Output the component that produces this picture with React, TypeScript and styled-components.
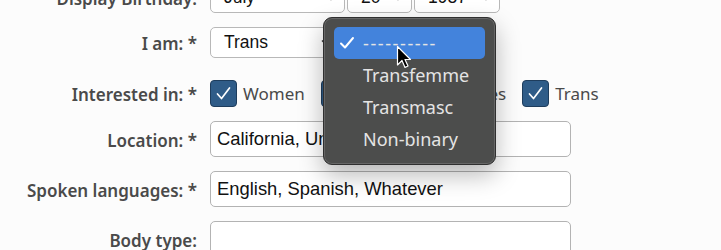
import styled, { createGlobalStyle } from 'styled-components'

const GlobalStyle = createGlobalStyle`
  html, body {
    margin: 0;
    padding: 0;
    background: #fcfcfc;
    overflow: hidden;
  }
`

const labelFont = `'Noto Sans', 'Open Sans', sans-serif`
const fieldFont = `'Liberation Sans', Arial, sans-serif`

/**
 * Page — the form is scrolled, so its first row is cut off at the top
 */
const Page = styled.div`
  position: relative;
  width: 721px;
  height: 250px;
  overflow: hidden;
`

const Form = styled.div`
  display: flex;
  flex-direction: column;
  gap: 14px;
  margin-top: -18px;
`

const Row = styled.div<{ $padTop?: number }>`
  display: grid;
  grid-template-columns: 197px 361px;
  column-gap: 13px;
  align-items: center;
  padding-top: ${({ $padTop }) => $padTop ?? 0}px;
`

const Label = styled.div`
  text-align: right;
  font-family: ${labelFont};
  font-size: 17px;
  font-weight: 600;
  color: #4a4a4a;
  white-space: nowrap;
  padding-top: 2px;
`

const Inline = styled.div`
  display: flex;
  align-items: center;
  gap: 2px;
`

const SelectBox = styled.div<{ $w: number }>`
  box-sizing: border-box;
  width: ${({ $w }) => $w}px;
  height: 31px;
  display: flex;
  align-items: center;
  justify-content: space-between;
  padding: 0 8px 0 13px;
  background: #fff;
  border: 1px solid #b8b8b8;
  border-radius: 5px;
  font-family: ${fieldFont};
  font-size: 17.5px;
  color: #111;
`

const TextInput = styled.div`
  box-sizing: border-box;
  width: 361px;
  height: 36px;
  display: flex;
  align-items: center;
  padding: 0 6px;
  background: #fff;
  border: 1px solid #b3b3b3;
  border-radius: 5px;
  font-family: ${fieldFont};
  font-size: 18.4px;
  color: #111;
  white-space: nowrap;
  overflow: hidden;
`

const Checks = styled.div`
  display: flex;
  align-items: center;
  gap: 16px;
`

const CheckItem = styled.label`
  display: flex;
  align-items: center;
  gap: 6px;
  font-family: ${labelFont};
  font-size: 17px;
  color: #4a4a4a;
`

const CheckBox = styled.span`
  box-sizing: border-box;
  width: 27px;
  height: 27px;
  display: flex;
  align-items: center;
  justify-content: center;
  background: #2f5c88;
  border: 1.5px solid #1e3d5d;
  border-radius: 4px;
`

/**
 * Native-looking popup menu, lying over the form
 */
const Menu = styled.div`
  position: absolute;
  left: 323px;
  top: 17px;
  width: 173px;
  box-sizing: border-box;
  padding: 9px 10px;
  background: #4c4d4c;
  border: 1px solid #2f2f2f;
  border-radius: 9px;
  box-shadow: inset 0 0 0 1px #666, 0 10px 24px rgba(0, 0, 0, 0.28);
`

const MenuItem = styled.div<{ $active?: boolean }>`
  height: 32px;
  display: flex;
  align-items: center;
  padding-left: 29px;
  position: relative;
  border-radius: 5px;
  background: ${({ $active }) => ($active ? '#4383dc' : 'transparent')};
  font-family: ${labelFont};
  font-size: 18px;
  color: #e4e4e4;
  letter-spacing: ${({ $active }) => ($active ? '1.6px' : '0')};
`

const Tick = styled.svg`
  position: absolute;
  left: 5px;
  top: 9px;
`

const Cursor = styled.svg`
  position: absolute;
  left: 396px;
  top: 45px;
`

const Chevron = () => (
  <svg width="10" height="7" viewBox="0 0 10 7">
    <path d="M1 1.5 L5 5.5 L9 1.5" fill="none" stroke="#333" strokeWidth="1.4" />
  </svg>
)

const Check = () => (
  <svg width="17" height="15" viewBox="0 0 17 15">
    <path d="M2.5 8 L6.5 12.5 L14.5 2" fill="none" stroke="#fff" strokeWidth="1.7" strokeLinecap="round" strokeLinejoin="round" />
  </svg>
)

export default function App() {
  return (
    <Page>
      <GlobalStyle />
      <Form>
        <Row>
          <Label>Display Birthday:</Label>
          <Inline>
            <SelectBox $w={135}>July<Chevron /></SelectBox>
            <SelectBox $w={65}>20<Chevron /></SelectBox>
            <SelectBox $w={86}>1987<Chevron /></SelectBox>
          </Inline>
        </Row>
        <Row>
          <Label>I am: *</Label>
          <Inline>
            <SelectBox $w={130}>Trans<Chevron /></SelectBox>
          </Inline>
        </Row>
        <Row $padTop={8}>
          <Label>Interested in: *</Label>
          <Checks>
            <CheckItem><CheckBox><Check /></CheckBox>Women</CheckItem>
            <CheckItem><CheckBox><Check /></CheckBox>Men</CheckItem>
            <CheckItem><CheckBox><Check /></CheckBox>Femmes</CheckItem>
            <CheckItem><CheckBox><Check /></CheckBox>Trans</CheckItem>
          </Checks>
        </Row>
        <Row>
          <Label>Location: *</Label>
          <TextInput>California, United States</TextInput>
        </Row>
        <Row>
          <Label>Spoken languages: *</Label>
          <TextInput>English, Spanish, Whatever</TextInput>
        </Row>
        <Row>
          <Label>Body type:</Label>
          <TextInput />
        </Row>
      </Form>

      <Menu>
        <MenuItem $active>
          <Tick width="16" height="14" viewBox="0 0 16 14">
            <path d="M2 7.5 L6 11.5 L14 2" fill="none" stroke="#fff" strokeWidth="2" strokeLinecap="round" strokeLinejoin="round" />
          </Tick>
          ----------
        </MenuItem>
        <MenuItem>Transfemme</MenuItem>
        <MenuItem>Transmasc</MenuItem>
        <MenuItem>Non-binary</MenuItem>
      </Menu>

      <Cursor width="16" height="26" viewBox="0 0 16 26">
        <path d="M1.5 1.5 L1.5 20 L6 15.5 L9 22.5 L12 21 L9 14.5 L14.5 14.5 Z" fill="#000" stroke="#fff" strokeWidth="1.2" strokeLinejoin="round" />
      </Cursor>
    </Page>
  )
}
